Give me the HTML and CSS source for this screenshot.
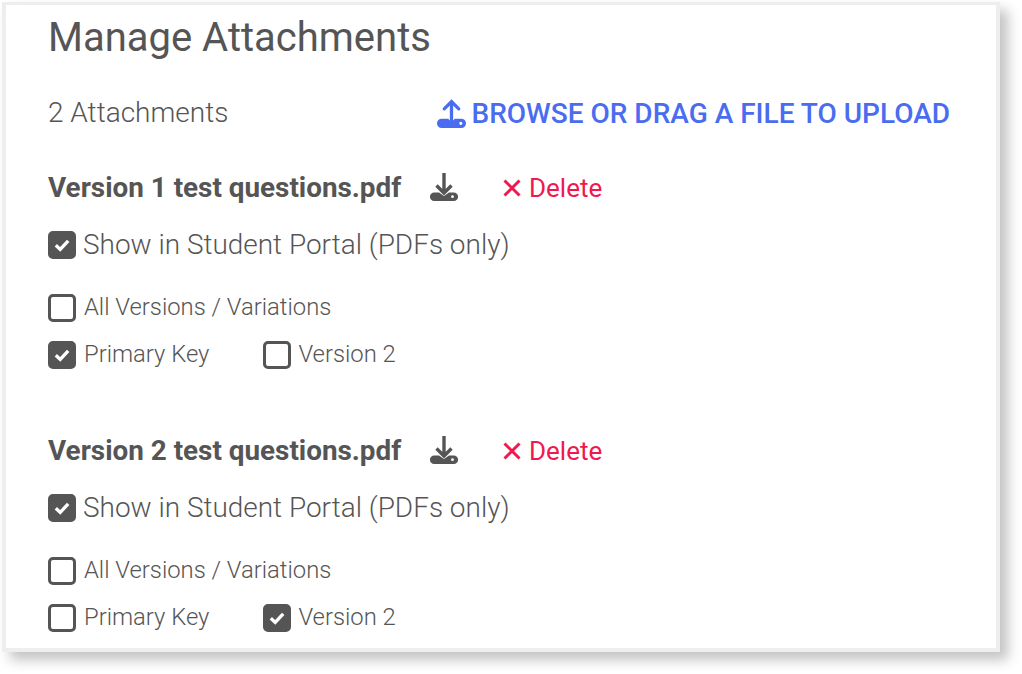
FILE: index.html
```html
<!DOCTYPE html>
<html lang="en">
<head>
<meta charset="utf-8">
<title>Manage Attachments</title>
<link rel="stylesheet" href="styles.css">
</head>
<body>
<svg class="defs" width="0" height="0" aria-hidden="true">
  <symbol id="up" viewBox="0 0 28 28">
    <path d="M4.500 19H11l1 1.500h4l1-1.500h6.500a4.500 4.500 0 0 1 0 9h-19a4.500 4.500 0 0 1 0-9Zm18.500 3a1.500 1.500 0 1 0 0 3 1.500 1.500 0 0 0 0-3Z" fill="currentColor" fill-rule="evenodd"/>
    <path d="M14 20.500V2.500M7 9.500l7-7 7 7" fill="none" stroke="currentColor" stroke-width="3.200" stroke-linecap="round"/>
  </symbol>
  <symbol id="down" viewBox="0 0 28 28">
    <path d="M4.200 19.500H9l5 3.500 5-3.500h4.800a4.200 4.200 0 0 1 0 8.500H4.200a4.200 4.200 0 0 1 0-8.500Zm18.300 2.800a1.400 1.400 0 1 0 0 2.800 1.400 1.400 0 0 0 0-2.800Z" fill="currentColor" fill-rule="evenodd"/>
    <path d="M14 0v19.500M6.500 12.500l7.500 7.500 7.500-7.500" fill="none" stroke="currentColor" stroke-width="3.400"/>
  </symbol>
</svg>
<main class="card">
  <h1 class="title">Manage Attachments</h1>
  <div class="summary">
    <span class="count">2 Attachments</span>
    <a class="upload">
      <svg class="icon up" viewBox="0 0 28 28"><use href="#up"/></svg>
      BROWSE OR DRAG A FILE TO UPLOAD
    </a>
  </div>

  <section class="file">
    <div class="file-head">
      <span class="name">Version 1 test questions.pdf</span>
      <svg class="icon download" viewBox="0 0 28 28"><use href="#down"/></svg>
      <a class="delete"><svg class="x" viewBox="0 0 18 18"><path d="M1.500 1.500 16.500 16.500M16.500 1.500 1.500 16.500"/></svg>Delete</a>
    </div>
    <label class="portal"><span class="box on"><svg viewBox="0 0 16 16"><path d="M3.500 8.200 6.700 11.200 12.500 5"/></svg></span>Show in Student Portal (PDFs only)</label>
    <label class="opt all"><span class="box"></span>All Versions / Variations</label>
    <div class="opts">
      <label class="opt primary"><span class="box on"><svg viewBox="0 0 16 16"><path d="M3.500 8.200 6.700 11.200 12.500 5"/></svg></span>Primary Key</label>
      <label class="opt version"><span class="box"></span>Version 2</label>
    </div>
  </section>

  <section class="file">
    <div class="file-head">
      <span class="name">Version 2 test questions.pdf</span>
      <svg class="icon download" viewBox="0 0 28 28"><use href="#down"/></svg>
      <a class="delete"><svg class="x" viewBox="0 0 18 18"><path d="M1.500 1.500 16.500 16.500M16.500 1.500 1.500 16.500"/></svg>Delete</a>
    </div>
    <label class="portal"><span class="box on"><svg viewBox="0 0 16 16"><path d="M3.500 8.200 6.700 11.200 12.500 5"/></svg></span>Show in Student Portal (PDFs only)</label>
    <label class="opt all"><span class="box"></span>All Versions / Variations</label>
    <div class="opts">
      <label class="opt primary"><span class="box"></span>Primary Key</label>
      <label class="opt version"><span class="box on"><svg viewBox="0 0 16 16"><path d="M3.500 8.200 6.700 11.200 12.500 5"/></svg></span>Version 2</label>
    </div>
  </section>
</main>
</body>
</html>
```
FILE: styles.css
```css
html, body {
  margin: 0;
  height: 674px;
  overflow: hidden;
  background: #fff;
}
.defs { position: absolute; }
.card {
  box-sizing: border-box;
  width: 998px;
  height: 650px;
  margin: 2px 0 0 2px;
  padding: 11px 46px 0 42px;
  background: #fff;
  border: 4px solid #eeeeee;
  border-top-width: 3px;
  box-shadow: 8px 8px 12px rgba(0, 0, 0, 0.24);
  font-family: Roboto, "Liberation Sans", sans-serif;
  color: #555;
  overflow: hidden;
}
.title {
  margin: 0;
  font-size: 40px;
  line-height: 44px;
  font-weight: 400;
}
.summary {
  display: flex;
  justify-content: space-between;
  align-items: center;
  margin-top: 34px;
  height: 36px;
}
.count { font-size: 28px; font-weight: 300; }
.upload {
  display: flex;
  align-items: center;
  gap: 6px;
  padding-top: 2px;
  color: #4a6cf0;
  font-size: 28px;
  font-weight: 500;
}
.icon { width: 28px; height: 28px; display: block; }
.icon.up { width: 29px; height: 29px; }
.file { margin-top: 41px; }
.file + .file { margin-top: 64px; }
.file-head {
  display: flex;
  align-items: center;
  height: 32px;
}
.name { font-size: 27.850px; font-weight: 700; width: 382px; }
.download { color: #555; }
.delete {
  margin-left: 45px;
  padding-top: 2px;
  display: flex;
  align-items: center;
  gap: 8px;
  color: #f0184f;
  font-size: 26px;
}
.x { width: 18px; height: 18px; display: block; }
.x path { fill: none; stroke: currentColor; stroke-width: 3; }
.box {
  box-sizing: border-box;
  flex: none;
  width: 28px;
  height: 28px;
  border: 3px solid #555;
  border-radius: 5px;
  margin-top: 2px;
  margin-right: 8px;
  display: block;
}
.box.on { background: #555; }
.box svg { display: block; width: 22px; height: 22px; }
.box svg path { fill: none; stroke: #fff; stroke-width: 2.400; }
.portal {
  display: flex;
  align-items: center;
  margin-top: 25px;
  height: 32px;
  font-size: 27.950px;
  font-weight: 300;
}
.portal .box { margin-right: 7px; }
.opt {
  display: flex;
  align-items: center;
  height: 32px;
  font-size: 23.800px;
  font-weight: 300;
}
.all { margin-top: 31px; }
.opts { display: flex; margin-top: 15px; }
.primary { margin-right: 54px; }
.version .box { margin-right: 7px; }
```
